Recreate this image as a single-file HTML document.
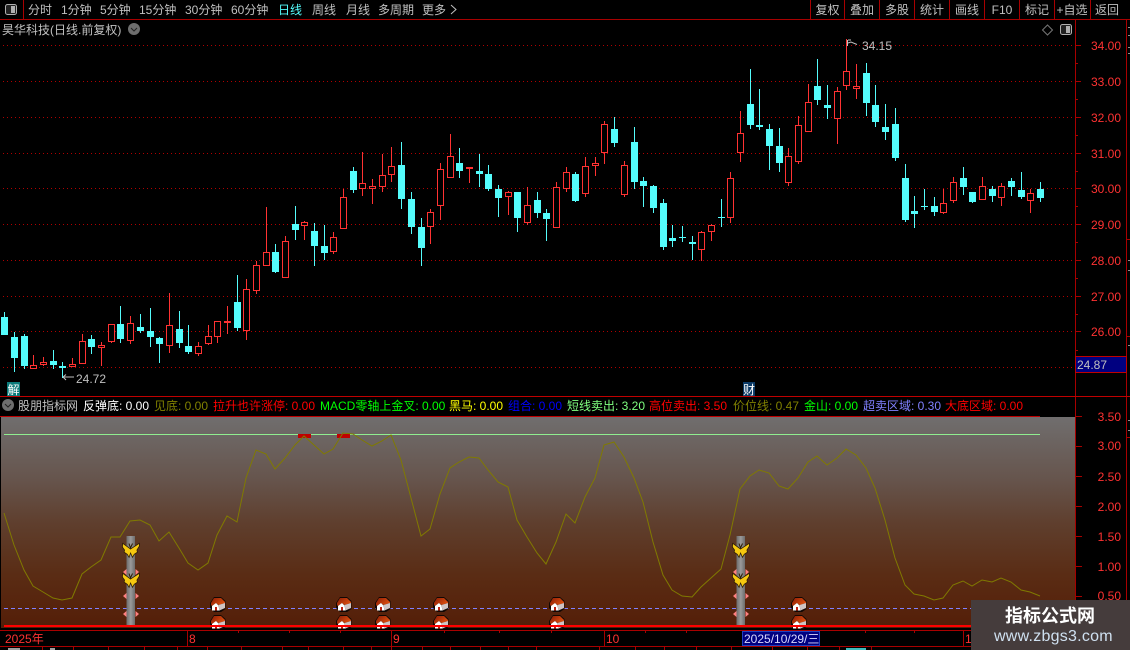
<!DOCTYPE html>
<html lang="zh">
<head>
<meta charset="utf-8">
<title>昊华科技</title>
<style>
html,body{margin:0;padding:0;background:#000;width:1130px;height:650px;overflow:hidden}
svg{display:block;position:absolute;left:0;top:0}
text{font-family:"Liberation Sans","WenQuanYi Zen Hei","Noto Sans CJK SC",sans-serif;font-size:12px;white-space:pre}
.g{fill:#c0c0c0}
.r{fill:#ff3232}
.m{text-anchor:middle}
.e{text-anchor:end}
</style>
</head>
<body>
<svg width="1130" height="650" viewBox="0 0 1130 650" xmlns="http://www.w3.org/2000/svg">
<defs>
<linearGradient id="pg" x1="0" y1="0" x2="0" y2="1"><stop offset="0" stop-color="#706e6e"/><stop offset=".3" stop-color="#66544c"/><stop offset=".5" stop-color="#5f3f2e"/><stop offset=".75" stop-color="#5a2c14"/><stop offset="1" stop-color="#541e08"/></linearGradient>
<linearGradient id="pil" x1="0" y1="0" x2="1" y2="0"><stop offset="0" stop-color="#6c6c6c"/><stop offset=".5" stop-color="#9a9a9a"/><stop offset="1" stop-color="#6c6c6c"/></linearGradient>
<linearGradient id="roof" x1="0" y1="0" x2="1" y2=".6"><stop offset="0" stop-color="#8a1c06"/><stop offset="1" stop-color="#e0500f"/></linearGradient>
<symbol id="house" width="16" height="15" viewBox="0 0 16 15" overflow="visible">
<polygon points="4,0 11,0 15.500,4 15.500,12 11,15 4,15 0,11 0,6" fill="#120804"/>
<polygon points="4,1 11,1 15,5 15,6 8.500,8 6,6 2,9 1,8 1,6" fill="url(#roof)"/>
<polygon points="8.500,8 15,6 15,11 9.500,13.500" fill="#cfc4c4"/>
<polygon points="6,6 8.500,8.500 9.500,13.500 2,13.500 2,9" fill="#fff"/>
<rect x="5" y="10" width="2" height="3.500" fill="#c02010"/>
</symbol>
<symbol id="fly" width="18" height="14" viewBox="0 0 18 14" overflow="visible">
<path d="M8.500 6.500L1 1 .8 4 3 7 2.500 9 5.500 11 7 13.500 8.500 9 10.500 13.500 12 11 15 9 14.500 7 17 3 17 1Z" fill="#f6c810" stroke="#2a1a04" stroke-width="1.500" paint-order="stroke"/>
<path d="M7 0.500L8.500 5 10.500 0.500" fill="none" stroke="#2a1a04"/>
</symbol>
<symbol id="pk" width="18" height="8" viewBox="-9 -4 18 8" overflow="visible">
<path d="M-4.500-3L-8 0-4.500 3ZM4.500-3L8 0 4.500 3Z" fill="#ff8080"/>
</symbol>
</defs>

<!-- toolbar -->
<path d="M0 19.500H1130M23.500 0V19M810.500 0V19M844.500 0V19M879.500 0V19M914.500 0V19M949.500 0V19M984.500 0V19M1019.500 0V19M1054.500 0V19M1090.500 0V19" stroke="#a80000" fill="none" shape-rendering="crispEdges"/>
<rect x="5.500" y="4.500" width="11" height="10" rx="2" fill="#222" stroke="#b0b0b0"/><rect x="11" y="6" width="4" height="7" fill="#b0b0b0"/>
<text class="g" x="28" y="14">分时</text>
<text class="g" x="61" y="14">1分钟</text>
<text class="g" x="100" y="14">5分钟</text>
<text class="g" x="139" y="14">15分钟</text>
<text class="g" x="185" y="14">30分钟</text>
<text class="g" x="231" y="14">60分钟</text>
<text x="278" y="14" fill="#54fcfc">日线</text>
<text class="g" x="312" y="14">周线</text>
<text class="g" x="346" y="14">月线</text>
<text class="g" x="378" y="14">多周期</text>
<text class="g" x="422" y="14">更多</text>
<path d="M451 5l5 4.500-5 4.500" fill="none" stroke="#c0c0c0"/>
<text class="g m" x="827.500" y="14">复权</text>
<text class="g m" x="862" y="14">叠加</text>
<text class="g m" x="897" y="14">多股</text>
<text class="g m" x="932" y="14">统计</text>
<text class="g m" x="967" y="14">画线</text>
<text class="g m" x="1002" y="14">F10</text>
<text class="g m" x="1037" y="14">标记</text>
<text class="g m" x="1072" y="14">+自选</text>
<text class="g m" x="1107" y="14">返回</text>

<text class="g" x="2" y="34">昊华科技(日线.前复权)</text>
<circle cx="134" cy="29" r="6" fill="#6e6e6e"/><path d="M131 28l3 3 3-3" fill="none" stroke="#222"/>
<path d="M1047.500 25l5 5-5 5-5-5z" fill="none" stroke="#777"/>
<rect x="1060.500" y="24.500" width="11" height="10" rx="2" fill="#222" stroke="#b0b0b0"/><rect x="1066" y="26" width="4" height="7" fill="#b0b0b0"/>

<!-- grid -->
<path d="M3 45.500H1075M3 81.500H1075M3 117.500H1075M3 153.500H1075M3 188.500H1075M3 224.500H1075M3 260.500H1075M3 296.500H1075M3 331.500H1075M3 367.500H1075" stroke="#b00000" stroke-dasharray="1 3" fill="none" shape-rendering="crispEdges"/>

<!-- cyan candles -->
<g shape-rendering="crispEdges">
<path stroke="#54fcfc" fill="none" d="M4.500 312V335M14.500 332V372M24.500 334V369M53.500 350V369M62.500 362V378M91.500 335V354M120.500 306V343M140.500 314V333M150.500 308V347M159.500 337V363M179.500 311V348M188.500 325V354M237.500 275V331M275.500 244V273M295.500 206V240M314.500 223V266M324.500 225V260M353.500 167V193M401.500 142V209M411.500 192V234M421.500 218V266M459.500 148V178M479.500 154V187M488.500 165V191M498.500 185V217M517.500 192V232M537.500 192V218M546.500 209V241M575.500 172V202M614.500 117V147M634.500 127V189M643.500 177V207M653.500 185V213M663.500 199V250M672.500 225V247M682.500 226V242M692.500 236V260M721.500 199V227M750.500 69V129M759.500 89V130M769.500 124V170M779.500 128V172M817.500 59V105M827.500 85V119M866.500 63V116M875.500 85V127M885.500 104V140M895.500 108V161M905.500 164V222M914.500 196V228M924.500 189V210M934.500 197V216M963.500 167V195M972.500 192V203M992.500 186V202M1011.500 178V196M1021.500 172V199M1040.500 182V202"/>
<path fill="#54fcfc" d="M1 317h7V335h-7zM11 337h7V358h-7zM21 336h7V366h-7zM50 361h7V365h-7zM59 366h7V368h-7zM88 339h7V347h-7zM117 324h7V339h-7zM137 327h7V331h-7zM147 331h7V337h-7zM156 338h7V344h-7zM176 329h7V343h-7zM185 346h7V352h-7zM234 302h7V328h-7zM272 252h7V272h-7zM292 224h7V230h-7zM311 231h7V246h-7zM321 246h7V253h-7zM350 171h7V190h-7zM398 165h7V199h-7zM408 199h7V227h-7zM418 227h7V248h-7zM456 163h7V171h-7zM476 171h7V174h-7zM485 174h7V189h-7zM495 189h7V198h-7zM514 192h7V218h-7zM534 200h7V213h-7zM543 213h7V219h-7zM572 174h7V201h-7zM611 129h7V143h-7zM631 142h7V182h-7zM640 181h7V186h-7zM650 186h7V208h-7zM660 203h7V247h-7zM669 238h7V241h-7zM679 237h7V238h-7zM689 242h7V244h-7zM718 217h7V218h-7zM747 104h7V125h-7zM756 125h7V127h-7zM766 129h7V146h-7zM776 146h7V163h-7zM814 86h7V100h-7zM824 105h7V108h-7zM863 73h7V103h-7zM872 105h7V122h-7zM882 127h7V132h-7zM892 124h7V158h-7zM902 178h7V220h-7zM911 211h7V214h-7zM921 206h7V207h-7zM931 206h7V212h-7zM960 178h7V187h-7zM969 192h7V202h-7zM989 189h7V196h-7zM1008 181h7V187h-7zM1018 190h7V197h-7zM1037 189h7V198h-7z"/>
<!-- red candles -->
<path stroke="#ff3232" fill="none" d="M33.500 355V369M43.500 357V366M72.500 358V367M82.500 334V364M101.500 342V366M111.500 324V343M130.500 316V344M169.500 293V353M198.500 342V356M208.500 325V345M217.500 321V343M227.500 306V334M246.500 279V340M256.500 261V294M266.500 207V266M285.500 236V278M304.500 221V240M333.500 232V254M343.500 189V229M362.500 152V196M372.500 179V204M382.500 154V192M391.500 147V182M430.500 209V244M440.500 163V220M450.500 134V178M469.500 167V183M508.500 191V215M527.500 187V225M556.500 182V228M566.500 167V192M585.500 157V197M595.500 157V176M604.500 121V164M624.500 161V197M701.500 231V261M711.500 224V241M730.500 172V223M740.500 111V162M788.500 148V186M798.500 116V164M808.500 84V132M837.500 87V144M846.500 39V90M856.500 64V99M943.500 189V214M953.500 177V203M982.500 177V200M1001.500 183V206M1030.500 189V213"/>
<path stroke="#ff3232" fill="#000" d="M30.500 365.500h6V368.500h-6zM40.500 362.500h6V364.500h-6zM69.500 364.500h6V366.500h-6zM79.500 341.500h6V363.500h-6zM98.500 345.500h6V347.500h-6zM108.500 324.500h6V341.500h-6zM127.500 323.500h6V340.500h-6zM166.500 325.500h6V345.500h-6zM195.500 346.500h6V353.500h-6zM205.500 336.500h6V343.500h-6zM214.500 321.500h6V336.500h-6zM224.500 321.500h6V322.500h-6zM243.500 289.500h6V330.500h-6zM253.500 265.500h6V290.500h-6zM263.500 252.500h6V265.500h-6zM282.500 241.500h6V277.500h-6zM301.500 222.500h6V225.500h-6zM330.500 237.500h6V251.500h-6zM340.500 197.500h6V228.500h-6zM359.500 183.500h6V188.500h-6zM369.500 186.500h6V188.500h-6zM379.500 175.500h6V186.500h-6zM388.500 166.500h6V174.500h-6zM427.500 212.500h6V226.500h-6zM437.500 169.500h6V205.500h-6zM447.500 156.500h6V177.500h-6zM466.500 167.500h6V168.500h-6zM505.500 192.500h6V196.500h-6zM524.500 205.500h6V222.500h-6zM553.500 187.500h6V227.500h-6zM563.500 172.500h6V188.500h-6zM582.500 166.500h6V193.500h-6zM592.500 163.500h6V165.500h-6zM601.500 124.500h6V152.500h-6zM621.500 165.500h6V194.500h-6zM698.500 232.500h6V249.500h-6zM708.500 225.500h6V231.500h-6zM727.500 178.500h6V217.500h-6zM737.500 133.500h6V152.500h-6zM785.500 156.500h6V182.500h-6zM795.500 125.500h6V161.500h-6zM805.500 102.500h6V131.500h-6zM834.500 91.500h6V118.500h-6zM843.500 71.500h6V85.500h-6zM853.500 86.500h6V88.500h-6zM940.500 203.500h6V212.500h-6zM950.500 182.500h6V200.500h-6zM979.500 186.500h6V199.500h-6zM998.500 186.500h6V197.500h-6zM1027.500 193.500h6V200.500h-6z"/>
</g>

<!-- hi/lo labels -->
<path d="M847.500 40V46M848 40h3M848 43l3-1 6 2.500" fill="none" stroke="#c0c0c0"/>
<text class="g" x="862" y="50">34.15</text>
<path d="M63 377h11M63 377l3-2.500M63 377l3 3" fill="none" stroke="#c0c0c0"/>
<text class="g" x="76" y="383">24.72</text>

<rect x="7" y="382" width="13" height="14" fill="#0a7a7a"/>
<text x="7.500" y="394" fill="#fff" font-size="12">解</text>
<rect x="743" y="382" width="12" height="14" fill="#0b3a66"/>
<text x="743" y="394" fill="#fff">财</text>

<!-- right axis -->
<path d="M1075.500 20V650M1126.500 20V650M1127 239.500h3M1127 336.500h3M1127 437.500h3" stroke="#a80000" fill="none" shape-rendering="crispEdges"/>
<path d="M1128 27.500h2M1128 35.500h2M1128 47.500h2M1128 53.500h2M1128 260.500h2M1128 270.500h2M1128 345.500h2M1128 420.500h2M1128 430.500h2" stroke="#909090" fill="none" shape-rendering="crispEdges"/>
<path d="M1075 45.500h6M1075 81.500h6M1075 117.500h6M1075 153.500h6M1075 188.500h6M1075 224.500h6M1075 260.500h6M1075 296.500h6M1075 331.500h6M1075 63.500h3M1075 99.500h3M1075 135.500h3M1075 171.500h3M1075 206.500h3M1075 242.500h3M1075 278.500h3M1075 314.500h3M1075 350.500h3" stroke="#a80000" fill="none" shape-rendering="crispEdges"/>
<text class="r e" x="1121" y="50">34.00</text>
<text class="r e" x="1121" y="86">33.00</text>
<text class="r e" x="1121" y="122">32.00</text>
<text class="r e" x="1121" y="158">31.00</text>
<text class="r e" x="1121" y="193">30.00</text>
<text class="r e" x="1121" y="229">29.00</text>
<text class="r e" x="1121" y="265">28.00</text>
<text class="r e" x="1121" y="301">27.00</text>
<text class="r e" x="1121" y="336">26.00</text>
<rect x="1075.500" y="356.500" width="51" height="16" fill="#000080" stroke="#c00000"/>
<text class="g" x="1077" y="369">24.87</text>

<!-- indicator header -->
<path d="M0 396.500H1130" stroke="#c00000" fill="none" shape-rendering="crispEdges"/>
<circle cx="8" cy="405" r="6" fill="#6e6e6e"/><path d="M5 404l3 3 3-3" fill="none" stroke="#222"/>
<text x="18" y="410" fill="#c0c0c0">股朋指标网</text>
<text x="83" y="410" fill="#fff">反弹底: 0.00</text>
<text x="154" y="410" fill="#808000">见底: 0.00</text>
<text x="213" y="410" fill="#ff0000">拉升也许涨停: 0.00</text>
<text x="320" y="410" fill="#00ff00">MACD零轴上金叉: 0.00</text>
<text x="449" y="410" fill="#ffff00">黑马: 0.00</text>
<text x="508" y="410" fill="#0000ff">组合: 0.00</text>
<text x="567" y="410" fill="#80ff80">短线卖出: 3.20</text>
<text x="649" y="410" fill="#ff0000">高位卖出: 3.50</text>
<text x="733" y="410" fill="#808000">价位线: 0.47</text>
<text x="804" y="410" fill="#00ff00">金山: 0.00</text>
<text x="863" y="410" fill="#8080ff">超卖区域: 0.30</text>
<text x="945" y="410" fill="#ff0000">大底区域: 0.00</text>

<!-- indicator panel -->
<rect x="1" y="417" width="1074" height="211" fill="url(#pg)"/>
<path d="M0 416.500H1040" stroke="#c00000" fill="none" shape-rendering="crispEdges"/>
<path d="M4 434.500H1040" stroke="#90ee90" fill="none" shape-rendering="crispEdges"/>
<path d="M4 608.500H1040" stroke="#8080ff" stroke-dasharray="4 3" fill="none" shape-rendering="crispEdges"/>
<rect x="298" y="434" width="13" height="4" fill="#c00000"/>
<rect x="337" y="434" width="13" height="4" fill="#c00000"/>
<polyline fill="none" stroke="#807a00" points="4,513 14,545 24,570 33,586 43,592 53,598 62,600 72,598 82,574 91,567 101,560 111,537 120,537 130,521 140,520 150,525 159,541 169,532 179,548 188,563 198,570 208,563 217,535 227,516 237,522 246,478 256,450 266,454 275,469 285,458 295,445 304,436 314,445 324,454 333,449 343,433 353,434 362,440 372,446 382,441 391,435 401,460 411,498 421,536 430,529 440,494 450,468 459,462 469,457 479,458 488,470 498,482 508,487 517,520 527,537 537,553 546,564 556,542 566,514 575,523 585,497 595,478 604,445 614,442 624,457 634,478 643,502 653,542 663,575 672,590 682,596 692,597 701,587 711,578 721,569 730,535 740,489 750,476 759,470 769,473 779,486 788,489 798,478 808,462 817,456 827,465 837,458 846,449 856,455 866,468 875,488 885,520 895,558 905,585 914,594 924,596 934,600 943,598 953,585 963,581 972,586 982,580 992,582 1001,578 1011,582 1021,590 1030,592 1040,596"/>

<!-- pillars -->
<rect x="126.500" y="536" width="8.500" height="90" fill="url(#pil)"/>
<rect x="736.500" y="536" width="8.500" height="90" fill="url(#pil)"/>
<use href="#pk" x="122" y="568"/><use href="#pk" x="122" y="592"/><use href="#pk" x="122" y="610"/>
<use href="#pk" x="732" y="568"/><use href="#pk" x="732" y="592"/><use href="#pk" x="732" y="610"/>
<use href="#fly" x="122" y="543"/><use href="#fly" x="122" y="573"/>
<use href="#fly" x="732" y="543"/><use href="#fly" x="732" y="573"/>

<!-- houses -->
<use href="#house" x="210" y="597"/><use href="#house" x="210" y="615"/>
<use href="#house" x="336" y="597"/><use href="#house" x="336" y="615"/>
<use href="#house" x="375" y="597"/><use href="#house" x="375" y="615"/>
<use href="#house" x="433" y="597"/><use href="#house" x="433" y="615"/>
<use href="#house" x="549" y="597"/><use href="#house" x="549" y="615"/>
<use href="#house" x="791" y="597"/><use href="#house" x="791" y="615"/>

<rect x="4" y="625" width="1071" height="2" fill="#ff0000"/>
<rect x="0" y="629" width="1075" height="1" fill="#000"/>

<!-- indicator axis -->
<path d="M1075 416.500h7M1075 446.500h7M1075 476.500h7M1075 506.500h7M1075 536.500h7M1075 566.500h7M1075 596.500h7" stroke="#a80000" fill="none" shape-rendering="crispEdges"/>
<text class="r e" x="1121" y="421">3.50</text>
<text class="r e" x="1121" y="450">3.00</text>
<text class="r e" x="1121" y="481">2.50</text>
<text class="r e" x="1121" y="511">2.00</text>
<text class="r e" x="1121" y="541">1.50</text>
<text class="r e" x="1121" y="571">1.00</text>
<text class="r e" x="1121" y="600">0.50</text>

<!-- date axis -->
<path d="M0 630.500H1075M0 646.500H1130M187.500 630V646M391.500 630V646M604.500 630V646M963.500 630V646M238.500 630v3M289.500 630v3M340.500 630v3M444.500 630v3M499.500 630v3M551.500 630v3M645.500 630v3M686.500 630v3M865.500 630v3M914.500 630v3M42.500 646v4M73.500 646v4M108.500 646v4M144.500 646v4M177.500 646v4M207.500 646v4M241.500 646v4M282.500 646v4M308.500 646v4M343.500 646v4M371.500 646v4M391.500 646v4M422.500 646v4M450.500 646v4M480.500 646v4M508.500 646v4M536.500 646v4M599.500 646v4M635.500 646v4M664.500 646v4M696.500 646v4M731.500 646v4M772.500 646v4M807.500 646v4M839.500 646v4M871.500 646v4" stroke="#a80000" fill="none" shape-rendering="crispEdges"/>
<rect x="8" y="648" width="12" height="2" fill="#a0a0a0"/>
<rect x="50" y="648" width="5" height="2" fill="#a0a0a0"/>
<rect x="846" y="648" width="20" height="2" fill="#3fbcbc"/>
<text class="r" x="5" y="643">2025年</text>
<text class="r" x="189" y="643">8</text>
<text class="r" x="393" y="643">9</text>
<text class="r" x="606" y="643">10</text>
<text class="r" x="965" y="643">1</text>
<rect x="742.500" y="631.500" width="77" height="14" fill="#000080" stroke="#2040c0"/>
<text x="744" y="643" fill="#d8d8ff">2025/10/29/三</text>

<!-- watermark -->
<rect x="971" y="600" width="159" height="50" fill="#453c3c"/>
<text x="1005" y="622" fill="#fff" style="font-size:18px;font-weight:bold;font-family:'Noto Sans CJK SC','WenQuanYi Zen Hei',sans-serif">指标公式网</text>
<text x="994" y="641" fill="#cfe0f0" style="font-size:16px;letter-spacing:.25px">www.zbgs3.com</text>
</svg>
</body>
</html>
